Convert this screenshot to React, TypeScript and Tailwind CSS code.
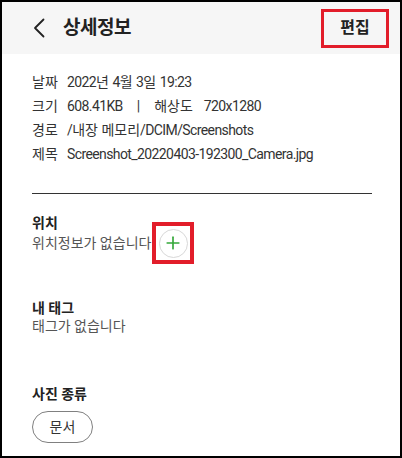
import { Plus } from "lucide-react";

const font = { fontFamily: '"Roboto", "Noto Sans CJK KR", sans-serif' };

const InfoRow = ({ label, children }: { label: string; children: React.ReactNode }) => (
  <div className="flex items-center h-6 text-[14px] text-[#333] whitespace-pre">
    <span className="w-[35px] shrink-0">{label}</span>
    <span>{children}</span>
  </div>
);

const L = ({ children }: { children: React.ReactNode }) => (
  <span className="tracking-[-0.6px]">{children}</span>
);

export default function App() {
  return (
    <div
      className="w-[402px] h-[458px] border-2 border-black bg-white overflow-hidden flex flex-col"
      style={font}
    >
      {/* header */}
      <div className="h-[52px] bg-[#f6f6f6] flex items-center pl-[31px] pr-[11px] shrink-0">
        <svg width="12" height="20" viewBox="0 0 12 20" fill="none" className="text-[#222]">
          <path d="M10.5 1.5 L2 10 L10.5 18.5" stroke="currentColor" strokeWidth="1.8" strokeLinecap="round" strokeLinejoin="round" />
        </svg>
        <span className="ml-[18px] text-[19px] font-bold text-[#222] tracking-tight">상세정보</span>
        <div className="ml-auto w-[68px] h-[39px] border-[3px] border-[#e21d2a] flex items-center justify-center">
          <span className="text-[16px] font-bold text-[#222]">편집</span>
        </div>
      </div>

      <div className="px-[30px] pt-4">
        <InfoRow label="날짜">
          <L>2022</L>년 <L>4</L>월 <L>3</L>일 <L>19:23</L>
        </InfoRow>
        <InfoRow label="크기">
          <L>608.41KB</L>
          <span className="ml-[14px] mr-[14px]">|</span>
          해상도<span className="ml-[11px] tracking-[-0.6px]">720x1280</span>
        </InfoRow>
        <InfoRow label="경로">
          <L>/</L>내장 메모리<L>/DCIM/Screenshots</L>
        </InfoRow>
        <InfoRow label="제목">
          <L>Screenshot_20220403-192300_Camera.jpg</L>
        </InfoRow>

        <div className="mt-[27px] mr-[-2px] border-t border-[#333]" />

        {/* location */}
        <div className="mt-[19px]">
          <div className="text-[14px] font-bold text-[#222] leading-5">위치</div>
          <div className="flex items-center h-5">
            <span className="text-[14px] text-[#555]">위치정보가 없습니다</span>
            <div className="ml-px -my-[11px] w-[42px] h-[42px] border-[4px] border-[#e21d2a] flex items-center justify-center">
              <div className="w-[29px] h-[29px] rounded-full border border-[#d8d8d8] flex items-center justify-center">
                <Plus size={20} strokeWidth={2} className="text-[#35a83a]" />
              </div>
            </div>
          </div>
        </div>

        {/* tags */}
        <div className="mt-[45px]">
          <div className="text-[14px] font-bold text-[#222] leading-5">내 태그</div>
          <div className="text-[14px] text-[#555] leading-4">태그가 없습니다</div>
        </div>

        {/* category */}
        <div className="mt-[50px]">
          <div className="text-[14px] font-bold text-[#222] leading-5">사진 종류</div>
          <div className="mt-[7px] w-[61px] h-[32px] rounded-full border border-[#808080] flex items-center justify-center text-[14px] text-[#333]">
            문서
          </div>
        </div>
      </div>
    </div>
  );
}
